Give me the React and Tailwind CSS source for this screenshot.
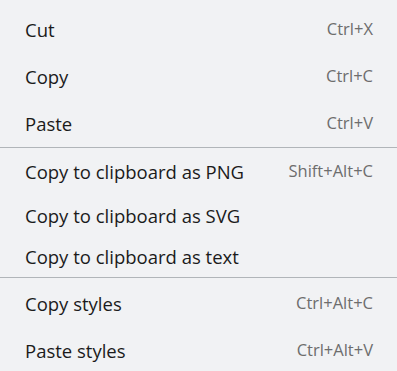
const GROUPS = [
  [
    { label: "Cut", keys: "Ctrl+X", h: "h-[47px]" },
    { label: "Copy", keys: "Ctrl+C", h: "h-[47px]" },
    { label: "Paste", keys: "Ctrl+V", h: "h-[47px]" },
  ],
  [
    { label: "Copy to clipboard as PNG", keys: "Shift+Alt+C", h: "h-[47px]" },
    { label: "Copy to clipboard as SVG", h: "h-[42px]" },
    { label: "Copy to clipboard as text", h: "h-[40px]" },
  ],
  [
    { label: "Copy styles", keys: "Ctrl+Alt+C", h: "h-[47px]" },
    { label: "Paste styles", keys: "Ctrl+Alt+V", h: "h-[47px]" },
  ],
];

const PAD = ["pt-[6px]", "pt-0", "pt-[2px]"];

export default function App() {
  return (
    <div
      className="w-[397px] h-[371px] overflow-hidden bg-[#f1f2f4]"
      style={{ fontFamily: '"Open Sans", "Noto Sans", sans-serif' }}
    >
      {GROUPS.map((items, gi) => (
        <div key={gi} className={`${PAD[gi]} ${gi > 0 ? "border-t border-[#b1b5b9]" : ""}`}>
          {items.map((it) => (
            <div key={it.label} className={`${it.h} flex items-center justify-between pl-[25px] pr-[24px]`}>
              <span className="text-[18.5px] text-[#1b1b1b]">{it.label}</span>
              {it.keys && <span className="text-[16.5px] text-[#6d6d6d]">{it.keys}</span>}
            </div>
          ))}
        </div>
      ))}
    </div>
  );
}
